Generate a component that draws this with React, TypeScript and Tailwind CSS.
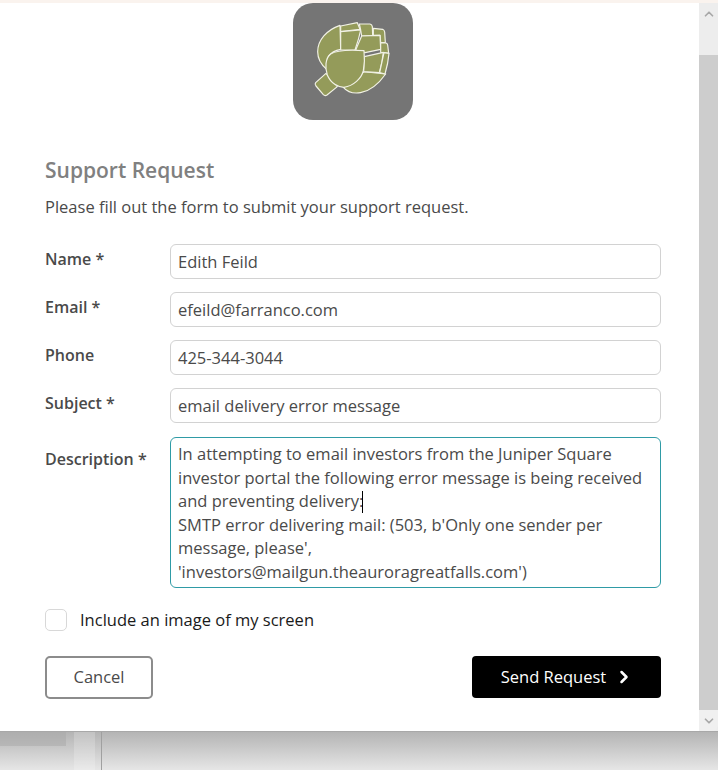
import React from 'react';
import { ChevronRight, ChevronUp, ChevronDown } from 'lucide-react';

const font = "font-['Open_Sans','Noto_Sans',sans-serif]";

const Logo: React.FC = () => (
  <div className="w-[120px] h-[117px] rounded-[20px] bg-[#757575] shrink-0">
    <svg viewBox="69 9 360 351" width="120" height="117" fill="#949b5a" stroke="#f2f2e6" strokeWidth="3.5" strokeLinejoin="round">
      <path d="M168 220 L137 248 Q133 253 138 258 L160 284 Q165 289 171 285 L202 260 Z" />
      <path d="M220 262 C240 285 295 295 347 222 L282 215 Z" />
      <path d="M210 76 C170 90 143 120 143 155 C143 175 155 195 170 208 L175 170 C185 155 200 150 212 148 Z" />
      <path d="M212 78 L262 68 L270 88 L212 95 Z" />
      <path d="M212 95 L272 90 C268 110 262 130 255 150 L212 150 Z" />
      <path d="M268 72 L300 72 Q306 73 307 80 L308 106 L275 108 L272 90 Z" />
      <path d="M310 85 L338 88 Q343 90 344 96 L346 127 L332 128 L330 106 L310 106 Z" />
      <path d="M275 108 L330 106 L332 148 L285 158 L257 150 Z" />
      <path d="M332 128 L348 129 Q352 130 353 135 L356 160 L332 157 Z" />
      <path d="M283 170 L340 157 C338 178 334 198 328 218 L281 215 Z" />
      <path d="M342 158 L357 160 C355 182 350 205 345 222 L329 218 Z" />
      <path d="M282 152 C250 150 200 150 182 162 C165 175 165 205 172 225 C182 250 205 262 222 262 C250 258 275 235 280 212 C284 190 284 170 282 152 Z" />
    </svg>
  </div>
);

const Field: React.FC<{ label: string; value: string }> = ({ label, value }) => (
  <div className="flex items-center">
    <div className="w-[125px] text-[16px] font-semibold text-[#4a4a4a] -mt-[5px]">{label}</div>
    <div className="flex-1 h-[35px] flex items-center pl-[7px] pr-2 pt-[2px] rounded-md border border-[#d2d2d2] text-[#4a4a4a]">{value}</div>
  </div>
);

const App: React.FC = () => {
  return (
    <div className={`w-[718px] h-[770px] flex flex-col overflow-hidden bg-white text-[16.5px] ${font}`}>
      <div className="h-[3px] bg-[#faf3ee]" />
      <div className="h-[729px] flex border-b border-[#a8a8a8]">
        <div className="flex-1 flex flex-col pl-[45px] pr-[38px]">
          <div className="self-start ml-[248px]"><Logo /></div>
          <h1 className="mt-[35px] text-[21px] leading-[30px] font-semibold text-[#808080]">Support Request</h1>
          <p className="mt-[10px] leading-[24px] text-[#4a4a4a]">Please fill out the form to submit your support request.</p>
          <div className="mt-[25px] flex flex-col gap-[13px]">
            <Field label="Name *" value="Edith Feild" />
            <Field label="Email *" value="efeild@farranco.com" />
            <Field label="Phone" value="425-344-3044" />
            <Field label="Subject *" value="email delivery error message" />
            <div className="flex mt-[1px]">
              <div className="w-[125px] text-[16px] font-semibold text-[#4a4a4a] mt-[10px]">Description *</div>
              <div className="flex-1 h-[151px] pl-[7px] pr-2 pt-[4px] rounded-md border border-[#2f9ba6] text-[#4a4a4a] leading-[23.5px] whitespace-nowrap">
                <div>In attempting to email investors from the Juniper Square</div>
                <div>investor portal the following error message is being received</div>
                <div className="relative w-fit">and preventing delivery:<span className="absolute right-0 top-[2px] w-px h-[22px] bg-black" /></div>
                <div>SMTP error delivering mail: (503, b'Only one sender per</div>
                <div>message, please',</div>
                <div>'investors@mailgun.theauroragreatfalls.com')</div>
              </div>
            </div>
          </div>
          <div className="mt-[20px] flex items-center gap-[13px]">
            <div className="w-[22px] h-[22px] rounded-[5px] border border-[#d8d8d8]" />
            <span className="text-[#1a1a1a]">Include an image of my screen</span>
          </div>
          <div className="mt-[23px] flex justify-between items-center">
            <button className="w-[108px] h-[43px] rounded-[5px] border-2 border-[#8c8c8c] text-[#4a4a4a] bg-white">Cancel</button>
            <button className="w-[189px] h-[42px] rounded-[4px] bg-black text-white flex items-center justify-center gap-2 pl-[2px]">
              Send Request
              <ChevronRight size={20} strokeWidth={3} />
            </button>
          </div>
        </div>
        <div className="w-[19px] flex flex-col bg-[#ededed]">
          <div className="h-[22px] flex items-center justify-center"><ChevronUp size={14} strokeWidth={3} className="text-[#a8a8a8]" /></div>
          <div className="h-[30px]" />
          <div className="flex-1 bg-[#cdcdcd]" />
          <div className="h-[21px] flex items-center justify-center bg-[#f0f0f0] rounded-br-md"><ChevronDown size={14} strokeWidth={3} className="text-[#a8a8a8]" /></div>
        </div>
      </div>
      <div className="flex-1 flex bg-gradient-to-b from-[#b4b4b4] to-[#e6e6e6]">
        <div className="w-[66px] h-[14px] bg-[#a8a8a8]/50" />
        <div className="ml-[8px] w-[21px] bg-white/20" />
        <div className="ml-[6px] w-px bg-[#a0a0a0]" />
      </div>
    </div>
  );
};

export default App;
